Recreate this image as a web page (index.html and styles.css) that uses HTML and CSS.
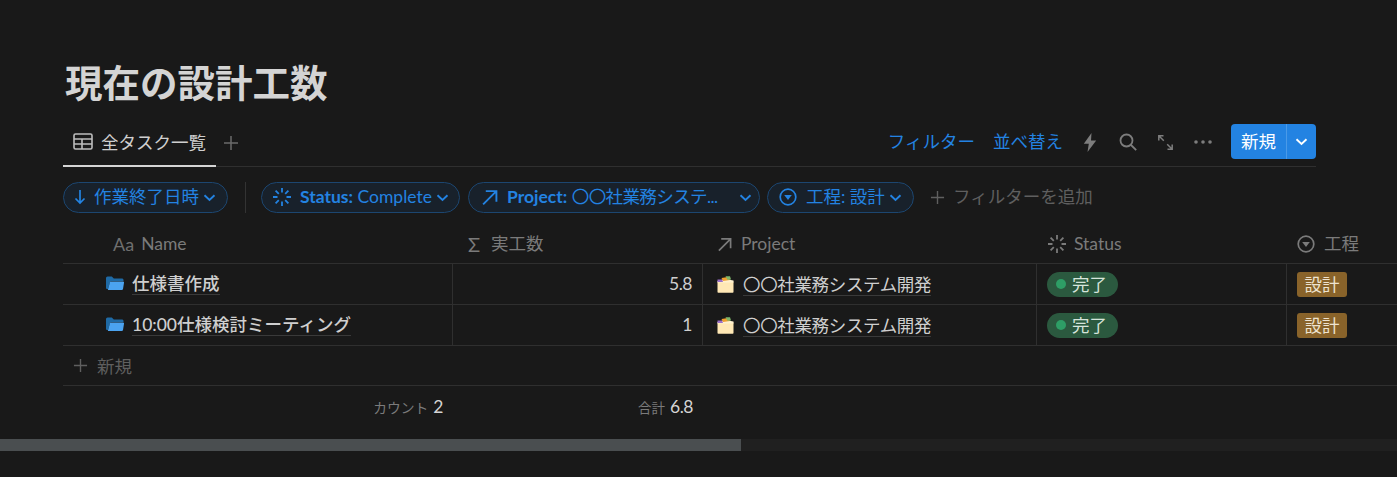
FILE: index.html
```html
<!DOCTYPE html>
<html lang="ja">
<head>
<meta charset="utf-8">
<title>現在の設計工数</title>
<link rel="stylesheet" href="styles.css">
</head>
<body>
<svg class="defs" width="0" height="0" aria-hidden="true">
  <defs>
    <symbol id="chev" viewBox="0 0 12 12"><path d="M2 4.200 6 8l4-3.800" fill="none" stroke="currentColor" stroke-width="1.500"/></symbol>
    <symbol id="spin" viewBox="0 0 20 20"><path d="M10 1v4.500M10 14.500V19M1 10h4.500M14.500 10H19M3.600 3.600l3.200 3.200M13.200 13.200l3.200 3.200M3.600 16.400l3.200-3.200M13.200 6.800l3.200-3.200" fill="none" stroke="currentColor" stroke-width="1.800"/></symbol>
    <symbol id="ne" viewBox="0 0 16 16"><path d="M2 14.500 14 2.500M4.500 2h10v10" fill="none" stroke="currentColor" stroke-width="1.800"/></symbol>
    <symbol id="sel" viewBox="0 0 18 18"><circle cx="9" cy="9" r="7.800" fill="none" stroke="currentColor" stroke-width="1.700"/><path d="M5.200 7h7.600L9 12z" fill="currentColor"/></symbol>
    <symbol id="plus" viewBox="0 0 16 16"><path d="M8 1v14M1 8h14" fill="none" stroke="currentColor" stroke-width="1.500"/></symbol>
    <symbol id="folder" viewBox="0 0 18 15"><path d="M0 2a1.500 1.500 0 0 1 1.500-1.500h4.300l2 2h8.500A1.500 1.500 0 0 1 17.500 4v1H4.500L2 13H1a1 1 0 0 1-1-1z" fill="#1f6aa5"/><path d="M4.200 5.500H17a1 1 0 0 1 1 1.200l-1 6.300a1.300 1.300 0 0 1-1.300 1.100H1.800z" fill="#4ba3f0"/></symbol>
    <symbol id="proj" viewBox="0 0 17 17"><path d="M.5 5.500h16V16a.8.8 0 0 1-.8.8H1.300a.8.8 0 0 1-.8-.8z" fill="#ffe8b5"/><path d="M.5 5 8 3l8.500 1.500v2H.5z" fill="#fff1cf"/><path d="M4.500 2 11 1l2 3-7 1z" fill="#f0a030"/><path d="M8.500.2H13l1 3.300-3.500.3z" fill="#7db66a"/><path d="M.5 3.500h4.500L6 6H.5z" fill="#9a6fc8"/></symbol>
  </defs>
</svg>

<main class="page">
  <div class="top">
    <h1 class="title">現在の設計工数</h1>
    <div class="toolbar">
      <div class="tabs">
        <div class="tab active">
          <svg class="ico-tab" viewBox="0 0 20 17"><path d="M2.500 1h15A1.500 1.500 0 0 1 19 2.500v12a1.500 1.500 0 0 1-1.500 1.500h-15A1.500 1.500 0 0 1 1 14.500v-12A1.500 1.500 0 0 1 2.500 1zM1 6h18M1 11h18M9 6v10" fill="none" stroke="currentColor" stroke-width="1.600"/></svg>
          <span class="tab-label">全タスク一覧</span>
        </div>
        <svg class="ico-addtab"><use href="#plus"/></svg>
      </div>
      <div class="actions">
        <span class="action-link">フィルター</span>
        <span class="action-link second">並べ替え</span>
        <svg class="tool bolt" viewBox="0 0 14 19"><path d="M8.500 0 .8 10.800h5L4.500 19l8.700-11.500H8z" fill="currentColor"/></svg>
        <svg class="tool search" viewBox="0 0 18 18"><circle cx="7.500" cy="7.500" r="6" fill="none" stroke="currentColor" stroke-width="1.800"/><path d="m12 12 5.200 5.200" fill="none" stroke="currentColor" stroke-width="1.800"/></svg>
        <svg class="tool expand" viewBox="0 0 15 15"><path d="M.8 5.500V.8h4.700M.8.800l5 5M14.200 9.500v4.700H9.500M14.200 14.200l-5-5" fill="none" stroke="currentColor" stroke-width="1.500"/></svg>
        <svg class="tool dots" viewBox="0 0 18 4"><circle cx="2" cy="2" r="1.800" fill="currentColor"/><circle cx="9" cy="2" r="1.800" fill="currentColor"/><circle cx="16" cy="2" r="1.800" fill="currentColor"/></svg>
        <div class="new-btn">
          <span class="new-label">新規</span>
          <span class="new-chev"><svg class="chev-white"><use href="#chev"/></svg></span>
        </div>
      </div>
    </div>
    <div class="filters">
      <div class="pill sort-pill">
        <svg class="ico-down" viewBox="0 0 12 16"><path d="M6 1v13M1.500 9.500 6 14l4.500-4.500" fill="none" stroke="currentColor" stroke-width="1.700"/></svg>
        <span>作業終了日時</span>
        <svg class="chev"><use href="#chev"/></svg>
      </div>
      <div class="divider"></div>
      <div class="pill status-pill">
        <svg class="ico-pill"><use href="#spin"/></svg>
        <span><b>Status:</b> Complete</span>
        <svg class="chev"><use href="#chev"/></svg>
      </div>
      <div class="pill project-pill">
        <svg class="ico-pill ne-pill"><use href="#ne"/></svg>
        <span class="clip"><b>Project:</b> <span class="clip-value">〇〇社業務システ...</span></span>
        <svg class="chev"><use href="#chev"/></svg>
      </div>
      <div class="pill koutei-pill">
        <svg class="ico-pill sel-pill"><use href="#sel"/></svg>
        <span>工程: 設計</span>
        <svg class="chev"><use href="#chev"/></svg>
      </div>
      <div class="add-filter">
        <svg class="ico-addfilter"><use href="#plus"/></svg>
        <span>フィルターを追加</span>
      </div>
    </div>
  </div>

  <div class="table">
    <div class="row head">
      <div class="cell c-name"><span class="aa">Aa</span><span>Name</span></div>
      <div class="cell c-num"><span class="sigma">Σ</span><span>実工数</span></div>
      <div class="cell c-proj"><svg class="ico-head"><use href="#ne"/></svg><span>Project</span></div>
      <div class="cell c-status"><svg class="ico-head spinh"><use href="#spin"/></svg><span>Status</span></div>
      <div class="cell c-kou"><svg class="ico-head selh"><use href="#sel"/></svg><span>工程</span></div>
    </div>
    <div class="row body">
      <div class="cell c-name"><svg class="ico-folder"><use href="#folder"/></svg><span class="link strong">仕様書作成</span></div>
      <div class="cell c-num value">5.8</div>
      <div class="cell c-proj"><svg class="ico-proj"><use href="#proj"/></svg><span class="link tight">〇〇社業務システム開発</span></div>
      <div class="cell c-status"><span class="badge"><i class="dot"></i>完了</span></div>
      <div class="cell c-kou"><span class="tag">設計</span></div>
    </div>
    <div class="row body">
      <div class="cell c-name"><svg class="ico-folder"><use href="#folder"/></svg><span class="link strong">10:00仕様検討ミーティング</span></div>
      <div class="cell c-num value">1</div>
      <div class="cell c-proj"><svg class="ico-proj"><use href="#proj"/></svg><span class="link tight">〇〇社業務システム開発</span></div>
      <div class="cell c-status"><span class="badge"><i class="dot"></i>完了</span></div>
      <div class="cell c-kou"><span class="tag">設計</span></div>
    </div>
    <div class="add-row"><svg class="ico-addrow"><use href="#plus"/></svg><span>新規</span></div>
    <div class="foot">
      <div class="f-cell f-count"><span class="f-label count-label">カウント</span><span class="f-val">2</span></div>
      <div class="f-cell f-sum"><span class="f-label">合計</span><span class="f-val">6.8</span></div>
    </div>
  </div>
</main>
<div class="scrollbar"><div class="thumb"></div></div>
</body>
</html>
```
FILE: styles.css
```css
* { box-sizing: border-box; }
html, body { margin: 0; height: 100%; }
body {
  background: #191919;
  color: #d4d4d4;
  font-family: Lato, "Noto Sans CJK JP", "Noto Sans", sans-serif;
  font-size: 17.5px;
  overflow: hidden;
}
.defs { position: absolute; }
.page { padding: 59px 0 0 63px; }
.top { margin-right: 81px; }
.title {
  margin: 0;
  height: 48px;
  padding-left: 2px;
  font-size: 37.5px;
  line-height: 48px;
  font-weight: 700;
  color: #d4d4d4;
}
.toolbar {
  margin-top: 11px;
  height: 49px;
  display: flex;
  justify-content: space-between;
  border-bottom: 1px solid #2f2f2f;
}
.tabs { display: flex; }
.tab {
  width: 153px;
  height: 49px;
  padding: 0 0 0 10px;
  display: flex;
  align-items: center;
  gap: 8px;
  border-bottom: 2px solid #d4d4d4;
  color: #cfcfcf;
  line-height: 1;
}
.tab-label { margin-top: 2px; }
.ico-tab { width: 20px; height: 17px; color: #bdbdbd; }
.ico-addtab { width: 16px; height: 16px; margin: 17px 0 0 7px; color: #6b6b6b; }
.actions { display: flex; align-items: center; height: 48px; }
.action-link { color: #2383e2; line-height: 1; }
.second { margin-left: 18px; }
.tool { color: #7d7d7d; flex: none; }
.bolt { width: 14px; height: 19px; margin-left: 20px; }
.search { width: 18px; height: 18px; margin-left: 22px; }
.expand { width: 15px; height: 15px; margin-left: 21px; }
.dots { width: 18px; height: 4px; margin-left: 21px; }
.new-btn {
  margin-left: 19px;
  margin-top: -1px;
  width: 85px;
  height: 35px;
  display: flex;
  background: #2383e2;
  border-radius: 4px;
  color: #fff;
}
.new-label { width: 55px; text-align: center; line-height: 35px; font-weight: 400; }
.new-chev { flex: 1; display: flex; align-items: center; justify-content: center; border-left: 1px solid #4a9ae8; }
.chev-white { width: 15px; height: 15px; }

.filters { height: 59px; padding-top: 15px; display: flex; align-items: flex-start; }
.pill {
  height: 31px;
  display: flex;
  align-items: center;
  border: 1px solid #1c4670;
  border-radius: 16px;
  background: #18212b;
  color: #2383e2;
  line-height: 1;
  white-space: nowrap;
  padding: 0 0 1px 10px;
}
.pill b { font-weight: 700; }
.chev { width: 15px; height: 15px; flex: none; margin-left: 3px; }
.sort-pill { width: 165px; }
.ico-down { width: 12px; height: 16px; margin-right: 8px; flex: none; }
.divider { width: 1px; height: 31px; margin: 0 15px 0 17px; background: #333; }
.status-pill { width: 199px; }
.ico-pill { width: 20px; height: 20px; margin-right: 8px; flex: none; }
.ne-pill { width: 17px; height: 17px; margin-left: 2px; margin-right: 9px; }
.sel-pill { width: 18px; height: 18px; margin-left: 1px; margin-right: 9px; }
.project-pill { width: 292px; margin-left: 8px; }
.clip { width: 218px; margin-right: 10px; }
.clip-value { letter-spacing: -0.6px; }
.koutei-pill { width: 147px; margin-left: 7px; }
.add-filter { margin-left: 16px; height: 30px; display: flex; align-items: center; gap: 8px; color: #5f5f5f; line-height: 1; }
.ico-addfilter { width: 15px; height: 15px; }

.row { display: flex; border-bottom: 1px solid #2f2f2f; }
.head { height: 38px; color: #7b7b7b; }
.head .cell { padding-bottom: 1px; }
.body { height: 41px; }
.cell { flex: none; display: flex; align-items: center; line-height: 1; white-space: nowrap; }
.c-name { width: 390px; padding-left: 50px; }
.c-num { width: 250px; padding-left: 15px; }
.c-proj { width: 334px; padding-left: 14px; }
.c-status { width: 250px; padding-left: 10px; }
.c-kou { width: 120px; padding-left: 10px; }
.body .cell { border-right: 1px solid #2f2f2f; }
.body .c-name { padding-left: 43px; padding-top: 2px; }
.body .c-proj { padding-top: 4px; }
.aa { font-size: 18px; margin-right: 7px; color: #6f6f6f; }
.sigma { width: 23px; font-size: 20px; color: #7b7b7b; }
.ico-head { width: 15px; height: 15px; margin-right: 9px; flex: none; }
.spinh { width: 20px; height: 20px; margin-right: 7px; }
.selh { width: 18px; height: 18px; margin-right: 9px; }
.ico-folder { width: 18px; height: 15px; margin-right: 8px; margin-top: -4px; flex: none; }
.ico-proj { width: 17px; height: 17px; margin-right: 9px; margin-top: -3px; flex: none; }
.link { border-bottom: 1px solid #3a3a3a; padding-bottom: 1px; color: #cfcfcf; }
.tight { letter-spacing: -0.35px; }
.strong { font-weight: 500; }
.value { justify-content: flex-end; padding: 0 10px 0 0; color: #cfcfcf; letter-spacing: -0.5px; }
.badge {
  height: 25px;
  width: 71px;
  padding: 2px 0 0 9px;
  display: flex;
  align-items: center;
  background: #2b593f;
  border-radius: 13px;
  color: #d6e4db;
}
.dot { width: 10px; height: 10px; border-radius: 50%; background: #2e9e66; margin: -3px 6px 0 0; }
.tag {
  height: 25px;
  width: 50px;
  padding-top: 2px;
  display: flex;
  align-items: center;
  justify-content: center;
  background: #89632a;
  border-radius: 3px;
  color: #eee3d0;
}
.add-row {
  height: 40px;
  padding: 2px 0 0 10px;
  display: flex;
  align-items: center;
  gap: 9px;
  color: #5f5f5f;
  border-bottom: 1px solid #2f2f2f;
  line-height: 1;
}
.ico-addrow { width: 15px; height: 15px; margin-top: -2px; }
.foot { height: 39px; padding-top: 2px; display: flex; align-items: center; }
.f-cell { display: flex; align-items: baseline; justify-content: flex-end; gap: 5px; line-height: 1; }
.f-count { width: 380px; }
.f-sum { width: 250px; }
.f-label { font-size: 13.500px; color: #7b7b7b; }
.count-label { font-size: 13.800px; }
.f-val { font-size: 17.500px; color: #d4d4d4; letter-spacing: -0.5px; }
.scrollbar { margin-top: 14px; height: 12px; background: #202020; }
.thumb { width: 741px; height: 12px; background: #4a4e50; }
```
